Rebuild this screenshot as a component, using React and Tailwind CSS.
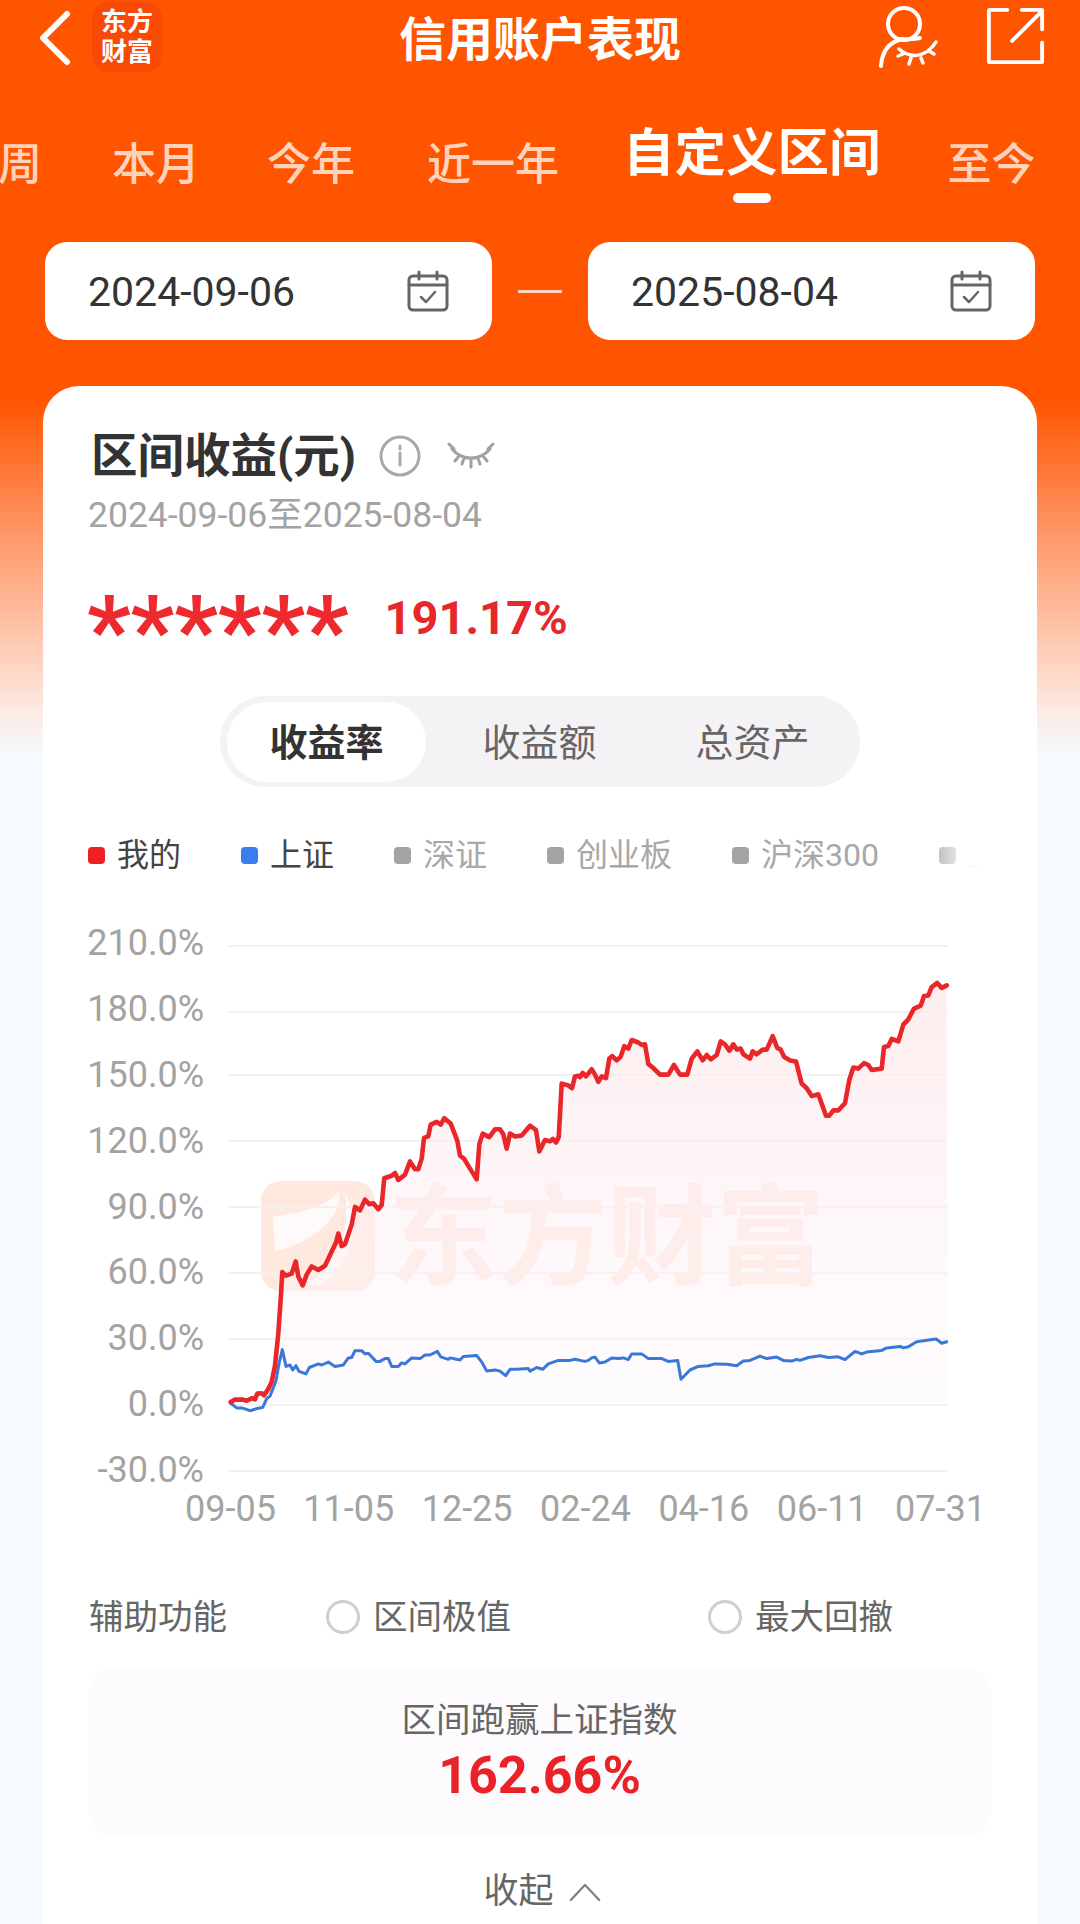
const red = [[92,1322],[105,1315],[130,1315],[140,1318],[155,1311],[165,1314],[172,1298],[185,1297],[192,1303],[205,1285],[215,1265],[225,1220],[235,1130],[243,1020],[247,958],[258,968],[275,962],[287,928],[295,970],[308,995],[320,965],[335,942],[355,952],[375,940],[395,900],[408,875],[415,850],[425,885],[435,880],[455,825],[465,775],[480,785],[495,755],[508,768],[520,765],[535,782],[545,770],[553,695],[575,688],[585,680],[595,700],[615,685],[630,648],[645,670],[655,670],[665,640],[672,582],[685,578],[692,545],[710,537],[722,545],[733,527],[752,542],[772,590],[780,632],[792,640],[810,668],[830,698],[838,600],[848,570],[868,580],[885,558],[900,558],[910,572],[920,612],[930,570],[945,578],[965,575],[990,548],[1008,560],[1018,620],[1035,588],[1050,592],[1058,585],[1068,595],[1076,580],[1085,430],[1105,435],[1116,443],[1125,410],[1135,408]];
const red2 = [[0,412],[8,400],[18,410],[35,390],[45,405],[55,425],[65,410],[78,415],[88,360],[97,353],[110,365],[122,355],[133,325],[145,332],[155,308],[175,315],[185,322],[195,320],[205,375],[218,385],[240,405],[265,405],[282,378],[300,405],[322,405],[335,360],[352,340],[368,365],[380,350],[392,362],[410,350],[422,312],[435,320],[448,338],[460,320],[470,335],[482,332],[490,348],[510,360],[518,340],[530,348],[548,335],[560,335],[578,297],[592,330],[602,335],[612,355],[630,365],[648,368],[665,430],[680,443],[695,465],[715,460],[738,520],[748,520],[760,505],[775,505],[795,485],[808,420],[820,385],[835,388],[852,373],[865,378],[875,392],[905,388],[912,328],[925,325],[935,305],[955,312],[970,265],[985,250],[1002,220],[1022,212],[1032,185],[1045,183],[1055,160],[1072,148],[1085,162],[1100,155]];
const blue = [[92,1325],[110,1338],[125,1338],[150,1346],[170,1340],[188,1337],[200,1312],[210,1305],[228,1262],[238,1210],[247,1175],[258,1222],[270,1218],[278,1232],[288,1220],[297,1236],[318,1243],[328,1225],[355,1215],[365,1218],[385,1210],[405,1222],[430,1218],[445,1198],[455,1197],[465,1178],[485,1178],[495,1187],[505,1185],[528,1208],[540,1208],[555,1200],[565,1200],[575,1222],[595,1222],[605,1212],[615,1215],[635,1198],[660,1200],[675,1190],[690,1190],[712,1180],[722,1195],[745,1202],[750,1198],[780,1204],[790,1194],[830,1191],[845,1210],[860,1235],[885,1232],[900,1235],[917,1248],[930,1230],[950,1230],[985,1228],[990,1235],[1010,1225],[1028,1230],[1045,1215],[1060,1210],[1075,1205],[1110,1205],[1125,1202]];
const blue2 = [[0,1205],[15,1208],[25,1205],[35,1198],[45,1196],[58,1212],[75,1210],[95,1198],[115,1200],[130,1198],[145,1203],[155,1187],[185,1187],[205,1200],[245,1200],[265,1208],[293,1205],[303,1258],[330,1232],[355,1222],[385,1220],[405,1215],[440,1216],[470,1220],[490,1207],[510,1205],[540,1193],[560,1200],[590,1196],[610,1205],[635,1207],[650,1202],[660,1205],[685,1197],[720,1192],[745,1197],[775,1195],[795,1203],[825,1180],[845,1187],[860,1182],[905,1177],[920,1170],[960,1166],[970,1170],[985,1167],[1010,1153],[1030,1150],[1068,1145],[1085,1157],[1100,1153]];

// the two halves of each series use their own x origin, same scale
const toPoints = (a, b) =>
    [...a.map(([x, y]) => [200 + x / 3, 930 + y / 2.8]), ...b.map(([x, y]) => [580 + x / 3, 930 + y / 2.8])]
        .map(([x, y]) => `${x.toFixed(1)},${y.toFixed(1)}`)
        .join(' ');

const redLine = toPoints(red, red2);
const blueLine = toPoints(blue, blue2);

const gridY = [946, 1012, 1075, 1141, 1207, 1273, 1339, 1405, 1471];
const yLabels = ['210.0%', '180.0%', '150.0%', '120.0%', '90.0%', '60.0%', '30.0%', '0.0%', '-30.0%'];
const xLabels = ['09-05', '11-05', '12-25', '02-24', '04-16', '06-11', '07-31'];

const legend = [
    { name: '我的', dot: 'bg-[#ee2024]', text: 'text-[#444444]' },
    { name: '上证', dot: 'bg-[#3b7ded]', text: 'text-[#444444]' },
    { name: '深证', dot: 'bg-[#a3a3a6]', text: 'text-[#a8a8a8]' },
    { name: '创业板', dot: 'bg-[#a3a3a6]', text: 'text-[#a8a8a8]' },
    { name: '沪深300', dot: 'bg-[#a3a3a6]', text: 'text-[#a8a8a8]' },
    { name: '上证50', dot: 'bg-[#a3a3a6]', text: 'text-[#a8a8a8]' },
];

const CalendarIcon = () => (
    <svg width="42" height="42" viewBox="0 0 42 42" fill="none" stroke="#666666" strokeWidth="3" strokeLinecap="round" strokeLinejoin="round">
        <rect x="2" y="6" width="38" height="34" rx="4" />
        <path d="M2 15h38M12 2v7M30 2v7" />
        <path d="M14 27l5 5 9-10" strokeWidth="2.5" />
    </svg>
);

const DateBox = ({ value }) => (
    <div className="w-[447px] h-[98px] rounded-[22px] bg-white flex items-center justify-between pl-[43px] pr-[43px]">
        <span className="pt-[4px] text-[41px] text-[#333333]">{value}</span>
        <CalendarIcon />
    </div>
);

const Radio = ({ label, className }) => (
    <div className={`flex items-center ${className}`}>
        <span className="w-[34px] h-[34px] rounded-full border-[3px] border-[#cfcfcf]" />
        <span className="ml-[13px] text-[34.5px] leading-[40px] text-[#666666]">{label}</span>
    </div>
);

export default function App() {
    return (
        <div className="w-[1080px] h-[1924px] overflow-hidden bg-[linear-gradient(180deg,#ff5500_0px,#ff5500_400px,#ff9a6c_540px,#ffc8b0_640px,#fce8e0_707px,#f6f9ff_755px,#f6f9ff_1924px)] font-[Roboto,'Noto_Sans_CJK_SC',sans-serif]">
            {/* top bar */}
            <div className="h-[80px] flex items-start">
                <div className="w-[220px] flex items-start">
                    <svg className="ml-[36px] mt-[10px]" width="36" height="56" viewBox="0 0 36 56" fill="none" stroke="#ffffff" strokeWidth="6" strokeLinecap="round" strokeLinejoin="round">
                        <path d="M31 4L7 28l24 24" />
                    </svg>
                    <div className="ml-[20px] mt-[2px] w-[70px] h-[70px] rounded-[16px] bg-[#f84a05] flex flex-col items-center justify-center text-white text-[26px] leading-[30px] font-bold">
                        <span>东方</span>
                        <span>财富</span>
                    </div>
                </div>
                <div className="flex-1 h-[80px] flex items-center justify-center text-white text-[47px] font-bold">信用账户表现</div>
                <div className="w-[220px] flex items-start">
                    <svg className="ml-[15px] mt-[4px]" width="66" height="66" viewBox="0 0 66 66" fill="none" stroke="#ffffff" strokeWidth="4" strokeLinecap="round" strokeLinejoin="round">
                        <path d="M6 62c1-16 9-24 21-27" />
                        <circle cx="29" cy="20" r="16" />
                        <path d="M28 35c6 1 12 0 17-1" />
                        <path d="M24 45c10 9 24 9 34-3M28 50l-5 2M36 54l-2 6M46 54l2 5M54 47l5 3M58 42l3-4" strokeWidth="3.5" />
                    </svg>
                    <svg className="ml-[44px] mt-[6px]" width="60" height="60" viewBox="0 0 62 62" fill="none" stroke="#ffffff" strokeWidth="4" strokeLinecap="round" strokeLinejoin="round">
                        <path d="M23 4H5a1 1 0 0 0-1 1v52a1 1 0 0 0 1 1h53a1 1 0 0 0 1-1V38" />
                        <path d="M28 36L59 5M38 4h21v20" />
                    </svg>
                </div>
            </div>

            {/* period tabs */}
            <div className="h-[130px] overflow-hidden flex items-start text-[44px] leading-[50px] text-[#ffd3bb]">
                <span className="mt-[60px] -ml-[2px] font-medium">周</span>
                <span className="mt-[60px] ml-[70px] font-medium whitespace-nowrap">本月</span>
                <span className="mt-[60px] ml-[67px] font-medium whitespace-nowrap">今年</span>
                <span className="mt-[60px] ml-[72px] font-medium whitespace-nowrap">近一年</span>
                <div className="ml-[64px] flex flex-col items-center">
                    <span className="mt-[44px] text-[51.5px] leading-[60px] font-bold text-white whitespace-nowrap">自定义区间</span>
                    <span className="mt-[9px] w-[38px] h-[10px] rounded-full bg-white" />
                </div>
                <span className="mt-[60px] ml-[67px] font-medium whitespace-nowrap">至今</span>
            </div>

            {/* date range */}
            <div className="mt-[32px] ml-[45px] w-[990px] flex items-center justify-between">
                <DateBox value="2024-09-06" />
                <span className="w-[44px] h-[3px] bg-[#ffd3bb]" />
                <DateBox value="2025-08-04" />
            </div>

            {/* main card */}
            <div className="mt-[46px] ml-[43px] w-[994px] h-[1600px] rounded-t-[36px] bg-white pt-[40px]">
                <div className="pl-[48px] h-[60px] flex items-center">
                    <span className="text-[46.5px] font-bold text-[#333333] leading-[60px]">区间收益(元)</span>
                    <svg className="ml-[23px]" width="42" height="42" viewBox="0 0 42 42" fill="none" stroke="#a8a8a8" strokeWidth="3">
                        <circle cx="21" cy="21" r="19" />
                        <path d="M21 18v12M21 11v3" strokeLinecap="round" />
                    </svg>
                    <svg className="ml-[26px]" width="48" height="30" viewBox="0 0 48 30" fill="none" stroke="#a0a0a0" strokeWidth="3" strokeLinecap="round">
                        <path d="M5 8c10 12 28 12 38 0M2 3l5 5M46 3l-5 5M12 15l-4 5M36 15l4 5M24 18v8M17 17l-2 6M31 17l2 6" />
                    </svg>
                </div>
                <div className="mt-[9px] pl-[45px] text-[35.5px] leading-[40px] text-[#a3a3a3]">2024-09-06至2025-08-04</div>
                <div className="mt-[53px] pl-[44px] h-[60px] flex items-center">
                    <span className="text-[96px] leading-[60px] pt-[26px] font-bold text-[#ee2a2e]">******</span>
                    <span className="ml-[36px] text-[47px] font-bold text-[#e6282c]">191.17%</span>
                </div>

                {/* metric switch */}
                <div className="mt-[48px] ml-[177px] w-[640px] h-[91px] rounded-full bg-[#f5f2f6] flex items-center px-[7px] text-[38px] text-[#666666]">
                    <div className="w-[199px] h-[80px] pt-[3px] rounded-full bg-white flex items-center justify-center font-bold text-[#333333]">收益率</div>
                    <div className="ml-[14px] pt-[3px] w-[199px] text-center">收益额</div>
                    <div className="ml-[14px] pt-[3px] w-[199px] text-center">总资产</div>
                </div>

                {/* legend, the last entry fades out at the edge */}
                <div className="relative mt-[48px] ml-[45px] w-[895px] h-[40px] overflow-hidden flex items-center text-[32px]">
                    {legend.map((item) => (
                        <div key={item.name} className="flex items-center mr-[60px] shrink-0 whitespace-nowrap">
                            <span className={`w-[17px] h-[17px] rounded-[4px] ${item.dot}`} />
                            <span className={`ml-[12px] ${item.text}`}>{item.name}</span>
                        </div>
                    ))}
                    <div className="absolute right-0 top-0 h-full w-[48px] bg-[linear-gradient(90deg,rgba(255,255,255,0.25),rgba(255,255,255,0.6)_35%,rgba(255,255,255,0.9)_70%,#ffffff)]" />
                </div>

                {/* chart */}
                <div className="mt-[35px] h-[580px] flex">
                    <div className="w-[161px] flex flex-col text-right text-[36px] text-[#a3a3a3]">
                        {yLabels.map((label) => (
                            <div key={label} className="h-[65.9px] leading-[66px]">{label}</div>
                        ))}
                    </div>
                    <div className="relative w-[776px] h-[580px]">
                        <div className="absolute left-[57px] top-[268px] flex items-center">
                            <svg width="114" height="110" viewBox="0 0 114 110">
                                <rect width="114" height="110" rx="20" fill="#ffe9df" />
                                <path d="M12 36c30-4 56-12 66-26 4 22-20 50-64 60z" fill="#fffafa" />
                                <path d="M44 104c30-16 46-50 40-92 16 30 8 70-24 92z" fill="#fffafa" />
                            </svg>
                            <span className="ml-[14px] pt-[6px] text-[109px] leading-[110px] font-bold text-[#ffe9df] whitespace-nowrap">东方财富</span>
                        </div>
                        <svg className="absolute inset-0" width="776" height="580" viewBox="204 910 776 580" fill="none">
                            <defs>
                                <linearGradient id="area" x1="0" y1="0" x2="0" y2="1">
                                    <stop offset="0" stopColor="#fdeaea" stopOpacity="0.85" />
                                    <stop offset="1" stopColor="#fdf4fb" stopOpacity="0.3" />
                                </linearGradient>
                            </defs>
                            {gridY.map((y) => (
                                <line key={y} x1="229" x2="948" y1={y} y2={y} stroke="#f3f0f2" strokeWidth="2" />
                            ))}
                            <polygon points={`${redLine} 948,1405 231,1405`} fill="url(#area)" />
                            <polyline points={blueLine} stroke="#3a78d8" strokeWidth="3" strokeLinejoin="round" strokeLinecap="round" />
                            <polyline points={redLine} stroke="#e9262a" strokeWidth="4.6" strokeLinejoin="round" strokeLinecap="round" />
                        </svg>
                    </div>
                </div>
                <div className="-mt-[1px] ml-[142px] w-[801px] h-[40px] flex justify-between text-[36px] leading-[40px] text-[#a3a3a3]">
                    {xLabels.map((label) => (
                        <span key={label}>{label}</span>
                    ))}
                </div>

                {/* helper toggles */}
                <div className="mt-[68px] ml-[46px] h-[40px] flex items-center">
                    <span className="text-[34.5px] leading-[40px] text-[#666666]">辅助功能</span>
                    <Radio label="区间极值" className="ml-[99px]" />
                    <Radio label="最大回撤" className="ml-[197px]" />
                </div>

                {/* excess return */}
                <div className="mt-[31px] ml-[45px] w-[903px] h-[169px] rounded-[26px] bg-[#fefbff] flex flex-col items-center pt-[32px]">
                    <span className="text-[34.5px] leading-[40px] text-[#666666]">区间跑赢上证指数</span>
                    <span className="mt-[6px] text-[52px] leading-[60px] font-bold text-[#ea2228]">162.66%</span>
                </div>

                <div className="mt-[35px] h-[40px] pl-[4px] flex items-center justify-center text-[#666666]">
                    <span className="text-[35px] leading-[40px]">收起</span>
                    <svg className="ml-[15px]" width="32" height="20" viewBox="0 0 36 22" fill="none" stroke="#808080" strokeWidth="2.5" strokeLinecap="round" strokeLinejoin="round">
                        <path d="M2 20L18 3l16 17" />
                    </svg>
                </div>
            </div>
        </div>
    );
}
